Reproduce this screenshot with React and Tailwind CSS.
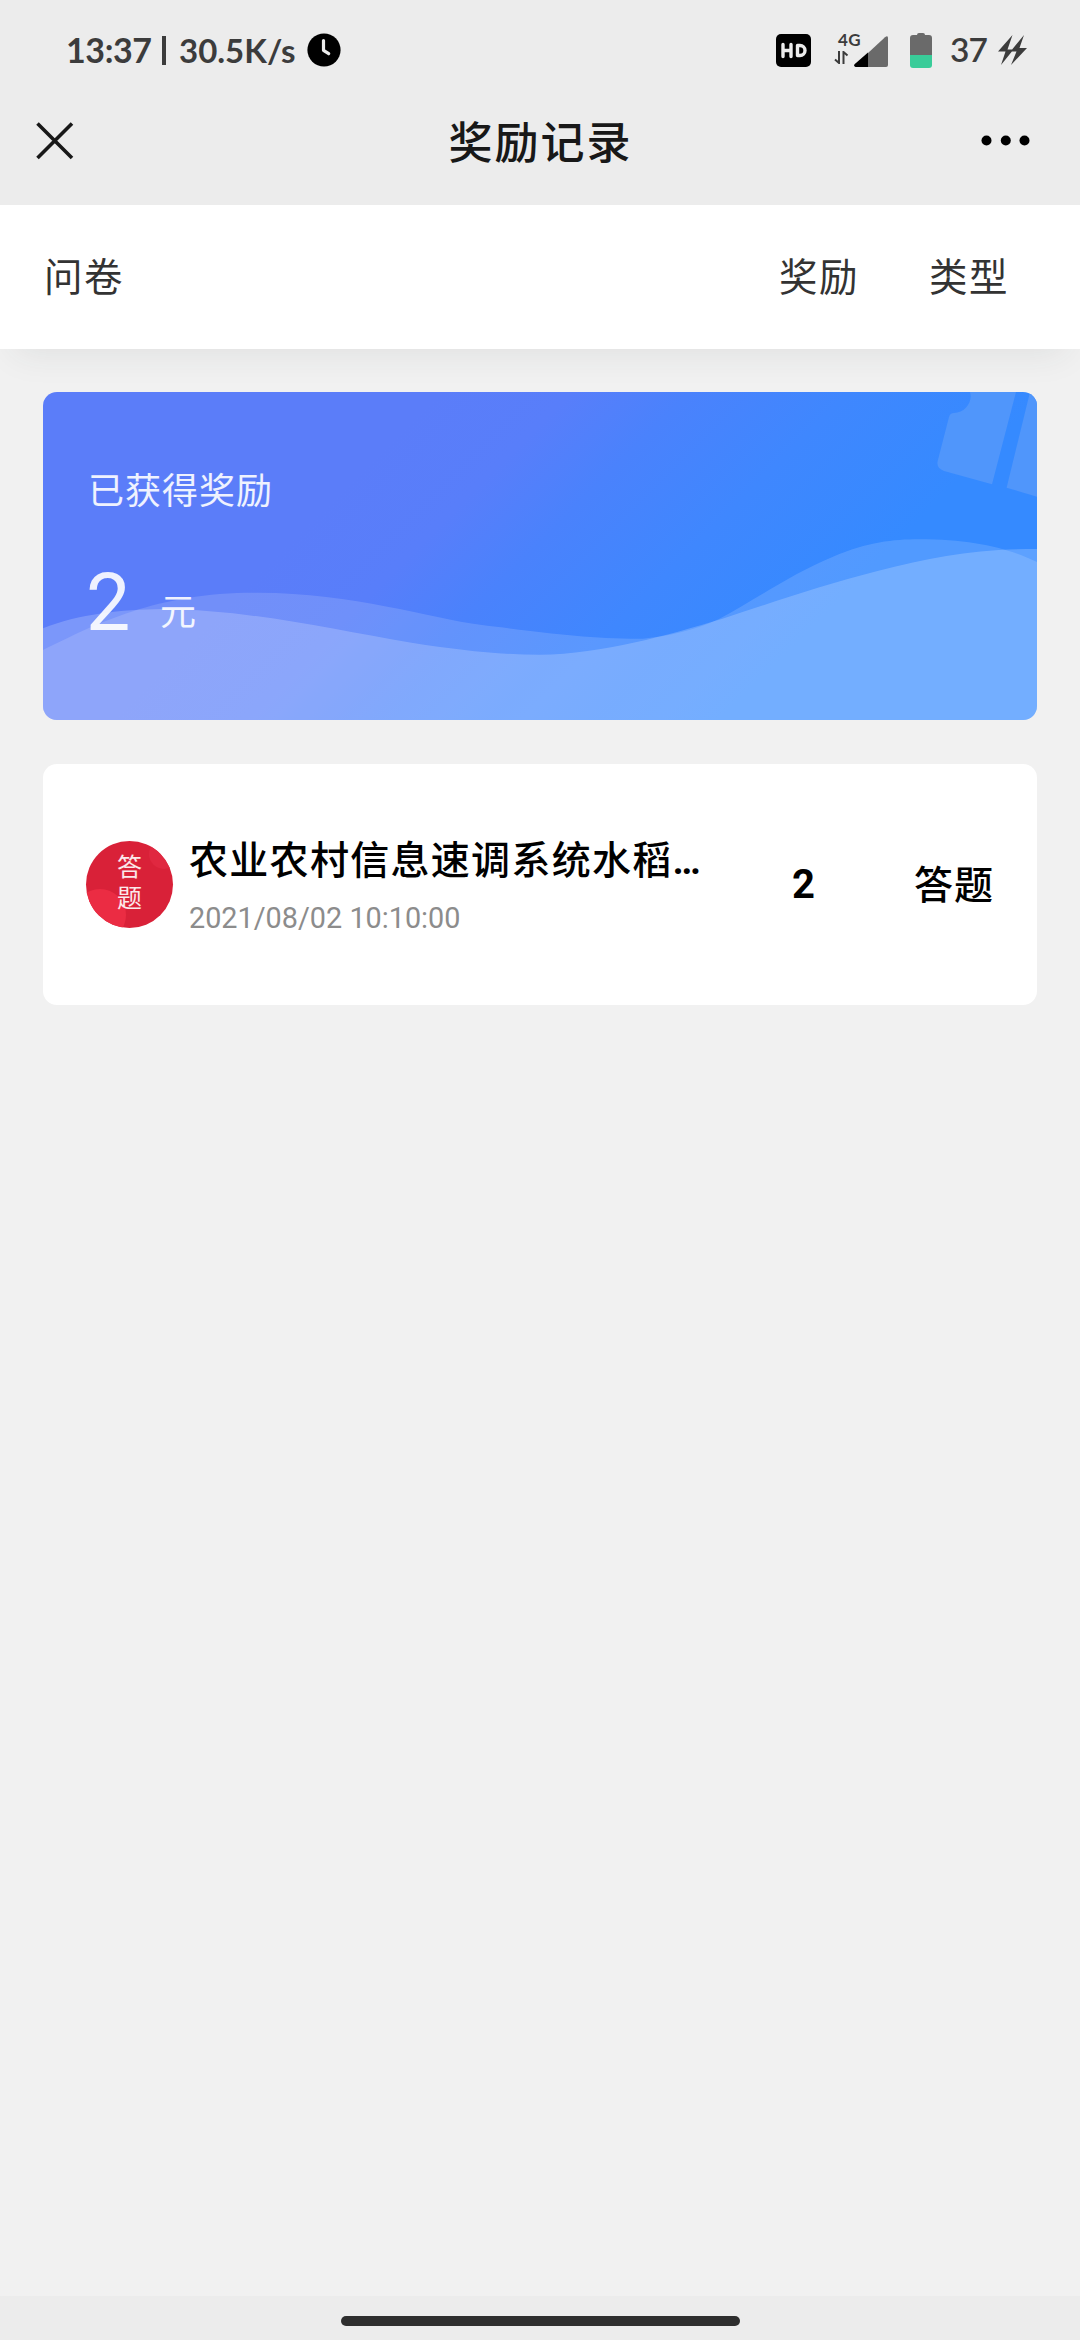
const RECORDS = [
  { id: 1, title: "农业农村信息速调系统水稻", time: "2021/08/02 10:10:00", reward: 2, type: "答题" },
];

function StatusBar() {
  return (
    <div className="flex h-[100px] items-center justify-between pl-[66px] pr-[53px] font-['Lato','Noto_Sans_CJK_SC',sans-serif] text-[#3c3c3c]">
      <div className="flex items-center font-bold leading-none">
        <span className="w-[96px] text-[34px] tracking-[-0.4px]">13:37</span>
        <span className="h-[29px] w-[4px] bg-[#3c3c3c]" />
        <span className="ml-[13px] w-[128px] text-[33px] tracking-[0px]">30.5K/s</span>
        <svg width="34" height="34" viewBox="0 0 34 34">
          <circle cx="17" cy="17" r="16.6" fill="#000" />
          <path d="M16.500 7.500v9.800l5.200 3.400" fill="none" stroke="#ececec" strokeWidth="3.200" strokeLinecap="round" strokeLinejoin="round" />
        </svg>
      </div>

      <div className="flex items-center">
        <svg width="35" height="33" viewBox="0 0 35 33">
          <rect width="35" height="33" rx="5" fill="#000" />
          <path d="M7 10.500v12M15 10.500v12M7 16.500h8M21.500 11.500v10h2.500a5 5 0 0 0 0-10z" fill="none" stroke="#ececec" strokeWidth="3.400" strokeLinecap="round" strokeLinejoin="round" />
        </svg>

        <div className="ml-[23px] flex h-[34px] items-end">
          <div className="flex h-[34px] w-[20px] flex-col justify-between">
            <span className="whitespace-nowrap pl-[4px] text-[17px] font-bold leading-[14px] tracking-[0.3px]">4G</span>
            <svg className="mb-[3px]" width="15" height="13" viewBox="0 0 15 13">
              <path d="M5 0v12L1 8.500M9.500 13V1L13.500 4.500" fill="none" stroke="#3c3c3c" strokeWidth="2" />
            </svg>
          </div>
          <svg width="34" height="31" viewBox="0 0 34 31">
            <path d="M34 2v27a2 2 0 0 1-2 2H14V17L31 1.200Q34-1 34 2z" fill="#6a6a6a" />
            <path d="M14 16.500V31H1.500Q-1 30 .8 28z" fill="#000" />
          </svg>
        </div>

        <svg className="ml-[22px]" width="22" height="35" viewBox="0 0 22 35">
          <path d="M7 2a2 2 0 0 1 2-2h4a2 2 0 0 1 2 2h4a3 3 0 0 1 3 3v17H0V5a3 3 0 0 1 3-3z" fill="#6a6a6a" />
          <path d="M0 22h22v10a3 3 0 0 1-3 3H3a3 3 0 0 1-3-3z" fill="#39cc99" />
        </svg>

        <span className="ml-[18px] w-[48px] text-[33.500px] font-semibold leading-none tracking-[-1px]">37</span>
        <svg width="29" height="30" viewBox="0 0 29 30">
          <path d="M14.500 0 0 16.500h7.500L3 30 15.500 14.500H9.500zM26 0 12.500 16.500h6L13 30 29 13h-7.500z" fill="#3c3c3c" />
        </svg>
      </div>
    </div>
  );
}

function NavBar() {
  return (
    <div className="flex h-[105px] items-start justify-between pl-[36px] pr-[50px]">
      <svg className="mt-[22px]" width="38" height="38" viewBox="0 0 38 38">
        <path d="M1.500 1.500l34.500 34.500M36 1.500L1.500 36" stroke="#181818" strokeWidth="3.600" fill="none" />
      </svg>
      <h1 className="ml-[26px] mt-[17px] text-[44px] font-medium leading-[46px] tracking-[2px] text-[#181818]">奖励记录</h1>
      <svg className="mt-[35px]" width="49" height="11" viewBox="0 0 49 11">
        <circle cx="5.500" cy="5.500" r="5" />
        <circle cx="24.800" cy="5.500" r="5" />
        <circle cx="43.500" cy="5.500" r="5" />
      </svg>
    </div>
  );
}

function TableHead() {
  return (
    <div className="flex h-[144px] items-center bg-white pb-[5px] pl-[44px] text-[38.500px] leading-none tracking-[1.500px] text-[#333] shadow-[0_18px_34px_-14px_rgba(40,50,60,0.09)]">
      <span className="flex-1">问卷</span>
      <span className="w-[150px]">奖励</span>
      <span className="w-[151px]">类型</span>
    </div>
  );
}

function RewardCard({ total }) {
  return (
    <section className="relative h-[328px] overflow-hidden rounded-[14px] bg-[linear-gradient(135deg,#5b7df9_30%,#587efa_40%,#4a82fc_49%,#3f87fe_61%,#358aff_76%)]">
      <svg className="absolute inset-0" width="994" height="328" viewBox="0 0 994 328">
        {/* coupon in the corner */}
        <path
          d="M927 0H973L949 92.300L901 79Q893 76 894.700 69L906 25Q907 21 911 21C922 21 930 10 927 0zM987 0H994V104.700L963.600 95.700z"
          fill="#5096fb"
        />
        {/* waves */}
        <path
          d="M0 258C55 231 115 200 215 200.700C312 201 385 226 439 233C505 241 545 247 600 246.700C625 244 650 239 676 227C715 206 750 181 790 164.700C825 150 850 147.300 876 147.300C930 147.300 965 156 994 170V328H0z"
          fill="#fff" fillOpacity="0.14"
        />
        <path
          d="M0 236.300C35 222 80 217.500 118 217C210 218 285 237 370 251C415 258 455 262.700 497 262.700C560 262 625 243 679.500 226.700C730 210 780 193 834.500 179C890 165 930 157 994 157V328H0z"
          fill="#fff" fillOpacity="0.2"
        />
      </svg>
      <div className="relative pl-[45px] pt-[78px] text-white/90">
        <p className="text-[36px] leading-[37px] tracking-[1px]">已获得奖励</p>
        <div className="-ml-[2px] mt-[56px] flex items-start">
          <span className="w-[74px] font-['Roboto',sans-serif] text-[79px] leading-[80px]">{total}</span>
          <span className="mt-[28px] text-[36px] leading-[37px]">元</span>
        </div>
      </div>
    </section>
  );
}

function Badge() {
  return (
    <div className="relative h-[87px] w-[87px] overflow-hidden rounded-full bg-[#d92138]">
      <svg className="absolute inset-0" width="87" height="87" viewBox="0 0 87 87">
        <circle cx="14" cy="74" r="26" fill="#eb2c43" />
        <circle cx="78" cy="13" r="15" fill="#e02840" />
      </svg>
      <p className="relative mx-auto w-[25px] pt-[9px] text-[25px] leading-[31px] text-white/90">答题</p>
    </div>
  );
}

function RecordRow({ record }) {
  return (
    <li className="flex h-[241px] items-center rounded-[14px] bg-white pl-[43px]">
      <Badge />
      <div className="ml-[16px] w-[520px] pt-[2px]">
        <p className="flex items-baseline whitespace-nowrap text-[39px] font-medium leading-[44px] tracking-[1.300px] text-black">
          {record.title}
          <span className="font-['Roboto',sans-serif] text-[38px] font-bold tracking-normal">…</span>
        </p>
        <p className="mt-[17px] font-['Roboto',sans-serif] text-[28.800px] leading-[36px] text-[#8c8c8c]">{record.time}</p>
      </div>
      <span className="ml-[83px] w-[122px] font-['Roboto',sans-serif] text-[40px] font-bold leading-none text-black">{record.reward}</span>
      <span className="pb-[4px] text-[39px] font-medium leading-none tracking-[1px] text-black">{record.type}</span>
    </li>
  );
}

export default function App() {
  const total = RECORDS.reduce((sum, r) => sum + r.reward, 0);

  return (
    <div className="flex h-[2340px] w-[1080px] flex-col overflow-hidden bg-[#f1f1f1] font-['Noto_Sans_CJK_SC',sans-serif]">
      <header className="bg-[#ececec]">
        <StatusBar />
        <NavBar />
      </header>
      <TableHead />

      <main className="flex-1 px-[43px] pt-[43px]">
        <RewardCard total={total} />
        <ul className="mt-[44px]">
          {RECORDS.map((r) => (
            <RecordRow key={r.id} record={r} />
          ))}
        </ul>
      </main>

      <footer className="flex h-[44px] justify-center bg-[#ececec] pt-[20px]">
        <div className="h-[10px] w-[399px] rounded-full bg-[#2e2e2e]" />
      </footer>
    </div>
  );
}
